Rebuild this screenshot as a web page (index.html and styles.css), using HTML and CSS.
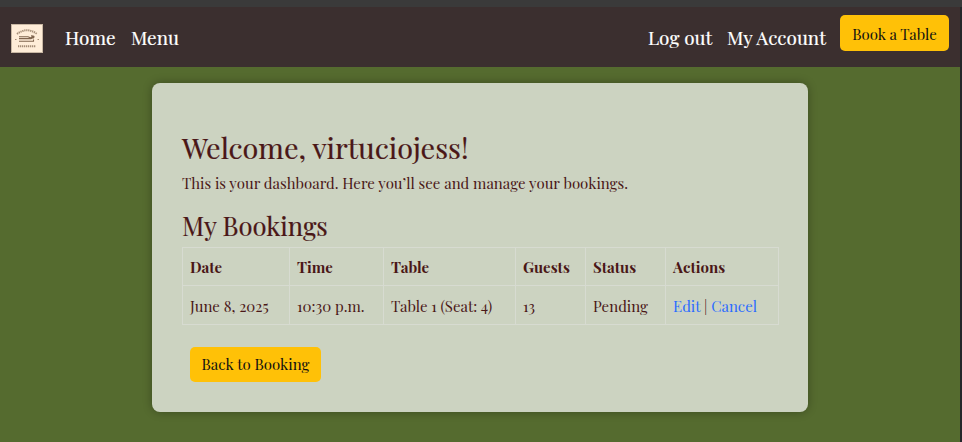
FILE: index.html
```html
<!DOCTYPE html>
<html lang="en">
<head>
<meta charset="utf-8">
<title>My Account</title>
<link rel="stylesheet" href="styles.css">
</head>
<body>
<div class="page">
  <nav class="navbar">
    <a class="brand">
      <svg width="32" height="29" viewBox="0 0 32 29" aria-hidden="true">
        <rect width="32" height="29" fill="#c9b8a4"/>
        <rect x="1" y="1" width="30" height="27" fill="#ffedd8"/>
        <path d="M6 10Q16 2.5 26 10" fill="none" stroke="#a58d76" stroke-width="2" stroke-dasharray="1.3 .7"/>
        <path d="M8 12.7H17L20 14L22 12M8 14.6H20L23 13M8 17.2H22.5V15.5M20 11.8Q25 11.8 22 14.3" fill="none" stroke="#80654e" stroke-width="1.1"/>
        <path d="M4 15.5H5.5M26.5 15.5H28" fill="none" stroke="#a68d75" stroke-width="1"/>
        <path d="M7 22.2H25" fill="none" stroke="#a58d76" stroke-width="2" stroke-dasharray="1.3 .7"/>
      </svg>
    </a>
    <a class="nav-link home">Home</a>
    <a class="nav-link menu">Menu</a>
    <a class="nav-link logout">Log out</a>
    <a class="nav-link account">My Account</a>
    <a class="btn book">Book a Table</a>
  </nav>
  <main class="card">
    <h1>Welcome, virtuciojess!</h1>
    <p>This is your dashboard. Here you’ll see and manage your bookings.</p>
    <h2>My Bookings</h2>
    <table>
      <colgroup><col class="c1"><col class="c2"><col class="c3"><col class="c4"><col class="c5"><col class="c6"></colgroup>
      <thead>
        <tr><th>Date</th><th>Time</th><th>Table</th><th>Guests</th><th>Status</th><th>Actions</th></tr>
      </thead>
      <tbody>
        <tr>
          <td>June 8, 2025</td>
          <td>10:30 p.m.</td>
          <td>Table 1 (Seat: 4)</td>
          <td>13</td>
          <td>Pending</td>
          <td class="actions"><a>Edit</a> | <a>Cancel</a></td>
        </tr>
      </tbody>
    </table>
    <a class="btn back">Back to Booking</a>
  </main>
</div>
</body>
</html>
```
FILE: styles.css
```css
* { box-sizing: border-box; }
body {
  margin: 0;
  height: 442px;
  overflow: hidden;
  background: #556b2f;
  border-top: 7px solid #3a3a3a;
  color: #4a1717;
  font: 15px/24px "Playfair Display", "Liberation Serif", serif;
}
.page { height: 435px; border-right: 2px solid #25272a; }
.navbar {
  display: flex;
  align-items: center;
  height: 60px;
  padding: 0 11px;
  background: #3b2f2f;
  white-space: nowrap;
}
.brand { width: 54px; height: 29px; margin-top: 3px; }
.brand svg { display: block; }
.nav-link { color: #fff; font-size: 18.9px; line-height: 30px; margin-top: 2px; -webkit-text-stroke: .2px #fff; }
.home { width: 66px; }
.logout { margin-left: auto; width: 79px; }
.account { width: 113px; }
.btn {
  display: flex;
  align-items: center;
  justify-content: center;
  height: 35px;
  background: #ffc107;
  color: #111;
  border-radius: 5px;
  white-space: nowrap;
}
.book { width: 109px; height: 36px; margin-top: -8px; padding-top: 2px; }
.card {
  width: 656px;
  height: 329px;
  margin: 16px auto 0;
  padding: 44px 30px 0;
  background: #ccd3c1;
  border-radius: 8px;
  box-shadow: 0 0 10px rgba(0, 0, 0, .3);
}
h1, h2 { margin: 0; font-weight: 400; white-space: nowrap; -webkit-text-stroke: .2px; }
h1 { font-size: 28.8px; line-height: 40px; }
p { margin: 4px 0 13px; }
h2 { font-size: 25.6px; line-height: 34px; }
table { width: 597px; margin-top: 5px; border-collapse: collapse; table-layout: fixed; }
.c1 { width: 107px; }
.c2 { width: 94px; }
.c3 { width: 132px; }
.c4 { width: 70px; }
.c5 { width: 80px; }
.c6 { width: 113px; }
th, td { height: 38px; padding: 1px 8px 0 7px; border: 1px solid #d7dbd1; text-align: left; white-space: nowrap; }
td { height: 39px; }
.actions a { color: #2b6cff; }
.back { width: 131px; margin: 22px 0 0 8px; padding-bottom: 1px; }
```
